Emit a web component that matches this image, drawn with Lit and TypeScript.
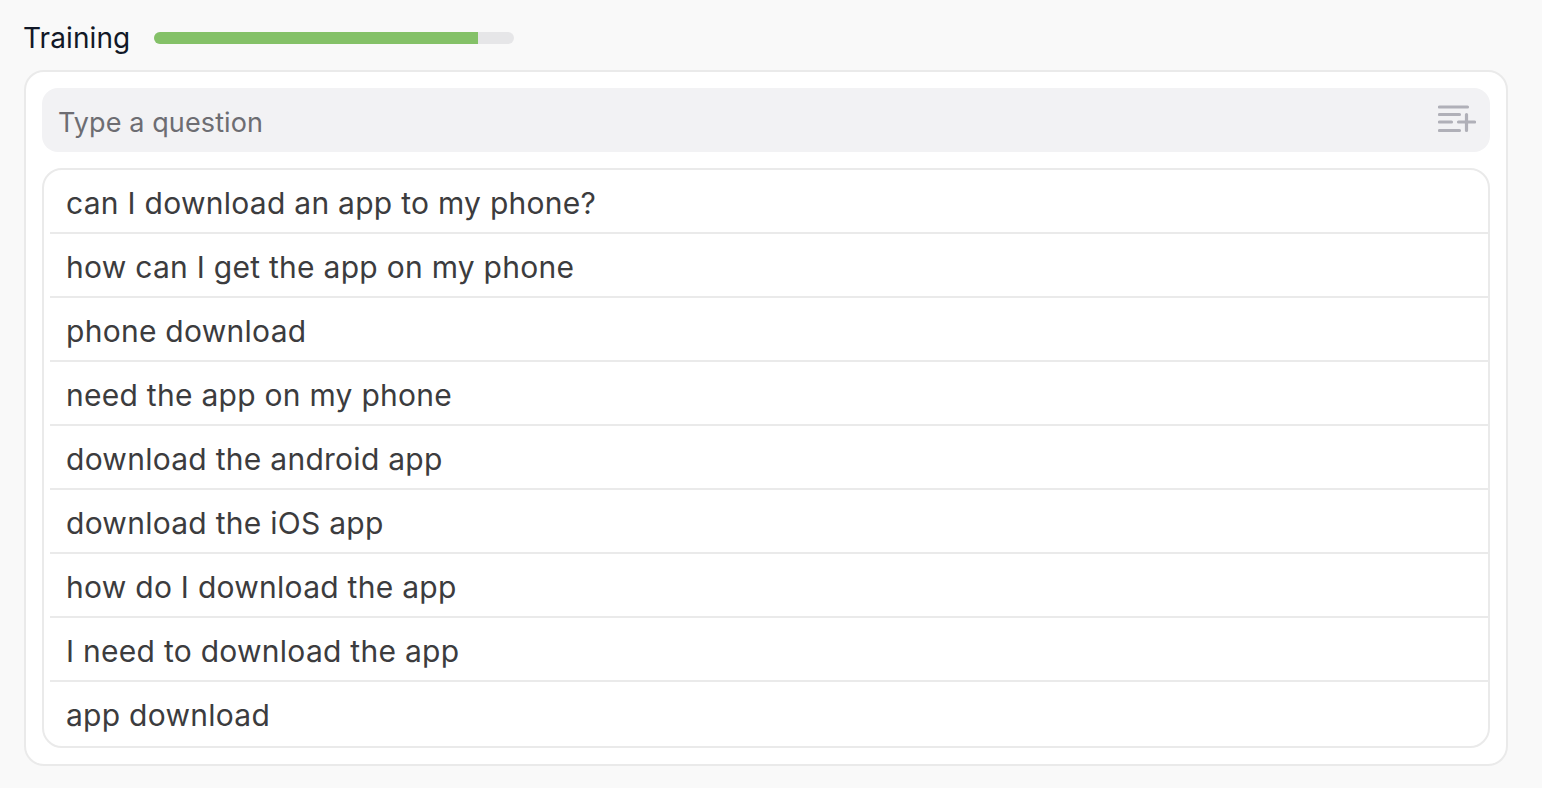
import { LitElement, html, css } from "lit";
import { customElement } from "lit/decorators.js";

const QUESTIONS = [
  "can I download an app to my phone?",
  "how can I get the app on my phone",
  "phone download",
  "need the app on my phone",
  "download the android app",
  "download the iOS app",
  "how do I download the app",
  "I need to download the app",
  "app download",
];

@customElement("app-root")
export class AppRoot extends LitElement {
  static styles = css`
    :host {
      display: block;
      box-sizing: border-box;
      width: 100%;
      height: 788px;
      background: #f9f9f9;
      padding: 16px 34px 0 24px;
      font-family: Inter, "Liberation Sans", sans-serif;
    }
    * { box-sizing: border-box; }
    .head {
      display: flex;
      align-items: center;
      height: 44px;
      margin-bottom: 10px;
    }
    .title {
      width: 130px;
      flex: none;
      font-size: 28px;
      line-height: 44px;
      font-weight: 400;
      letter-spacing: 0.1px;
      color: #111827;
      margin-left: -1px;
      margin-right: 1px;
    }
    .track {
      width: 360px;
      height: 12px;
      border-radius: 6px;
      background: #e6e6e8;
      overflow: hidden;
    }
    .fill {
      height: 100%;
      background: #84c168;
    }
    .card {
      height: 696px;
      background: #fff;
      border: 2px solid #eaeaea;
      border-radius: 20px;
      padding: 16px;
      display: flex;
      flex-direction: column;
      gap: 16px;
    }
    .input {
      height: 64px;
      flex: none;
      background: #f2f2f4;
      border-radius: 16px;
      padding: 0 14px 0 16px;
      display: flex;
      align-items: center;
      justify-content: space-between;
      font-size: 27px;
      letter-spacing: 0.1px;
      color: #6d6d72;
    }
    .placeholder { padding-top: 4px; }
    .input svg { display: block; flex: none; }
    .list {
      border: 2px solid #eaeaea;
      border-radius: 20px;
      padding-left: 6px;
      height: 580px;
      flex: none;
    }
    .row {
      height: 64px;
      padding: 4px 0 0 16px;
      display: flex;
      align-items: center;
      border-bottom: 2px solid #eaeaea;
      font-size: 30px;
      letter-spacing: 0.27px;
      color: #3c3c3e;
      white-space: nowrap;
    }
    .row:last-child { border-bottom: none; padding-top: 2px; }
  `;

  render() {
    return html`
      <div class="head">
        <div class="title">Training</div>
        <div class="track"><div class="fill" style="width: 90%"></div></div>
      </div>
      <div class="card">
        <div class="input">
          <span class="placeholder">Type a question</span>
          <svg width="38" height="30" viewBox="0 0 38 30" fill="none" stroke="#b0b0b8" stroke-width="3.2" stroke-linecap="round">
            <path d="M1.5 2H29.5M1.5 9.5H21.5M1.5 17H13.5M1.5 25.5H21.5M20.5 17H36.5M28.5 9.5V25.5" />
          </svg>
        </div>
        <div class="list">
          ${QUESTIONS.map((q) => html`<div class="row">${q}</div>`)}
        </div>
      </div>
    `;
  }
}
